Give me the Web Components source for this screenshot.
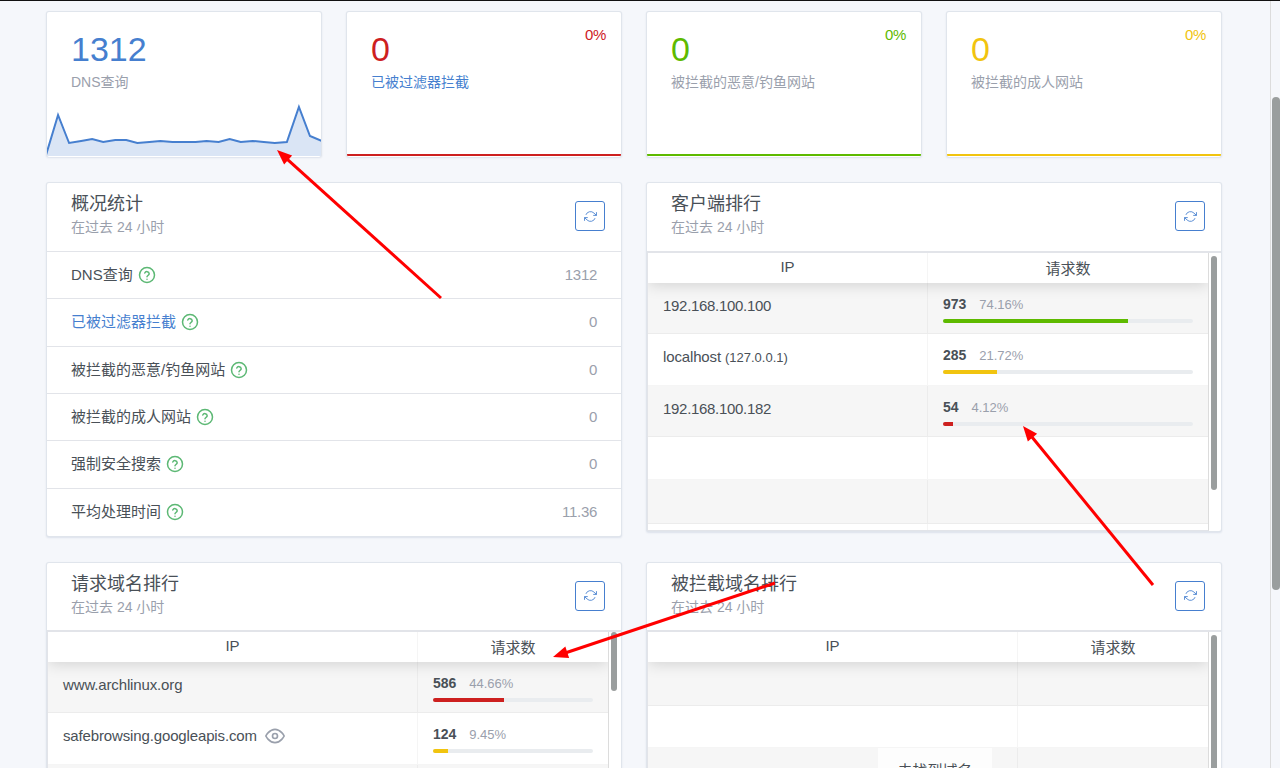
<!DOCTYPE html>
<html lang="zh">
<head>
<meta charset="utf-8">
<title>AdGuard Home</title>
<style>
    html, body {
        margin: 0;
        height: 768px;
        overflow: hidden;
        background: #f5f7fb;
    }
    body {
        font-family: "Liberation Sans", "Noto Sans CJK SC", sans-serif;
        font-size: 14px;
        color: #495057;
    }
</style>
</head>
<body>
<dash-app>
    <stat-card value="1312" label="DNS查询" chart></stat-card>
    <stat-card value="0" label="已被过滤器拦截" pct="0%" color="#cd201f" label-color="#467fcf"></stat-card>
    <stat-card value="0" label="被拦截的恶意/钓鱼网站" pct="0%" color="#5eba00"></stat-card>
    <stat-card value="0" label="被拦截的成人网站" pct="0%" color="#f1c40f"></stat-card>

    <dash-panel heading="概况统计">
        <stat-row label="DNS查询" value="1312"></stat-row>
        <stat-row label="已被过滤器拦截" value="0" label-color="#467fcf"></stat-row>
        <stat-row label="被拦截的恶意/钓鱼网站" value="0"></stat-row>
        <stat-row label="被拦截的成人网站" value="0"></stat-row>
        <stat-row label="强制安全搜索" value="0"></stat-row>
        <stat-row label="平均处理时间" value="11.36" last></stat-row>
    </dash-panel>

    <dash-panel heading="客户端排行">
        <rank-table col="280" thumb-top="3" thumb-height="234" height="279">
            <rank-row h="51" shade name="192.168.100.100" count="973" pct="74.16" color="#5eba00"></rank-row>
            <rank-row h="52" name="localhost" extra="(127.0.0.1)" count="285" pct="21.72" color="#f1c40f"></rank-row>
            <rank-row h="51" shade name="192.168.100.182" count="54" pct="4.12" color="#cd201f"></rank-row>
            <rank-row h="43"></rank-row>
            <rank-row h="44" shade></rank-row>
            <rank-row h="8"></rank-row>
        </rank-table>
    </dash-panel>

    <dash-panel heading="请求域名排行" short>
        <rank-table col="370" thumb-top="0" thumb-height="59" height="300">
            <rank-row h="51" shade name="www.archlinux.org" count="586" pct="44.66" color="#cd201f"></rank-row>
            <rank-row h="52" name="safebrowsing.googleapis.com" eye count="124" pct="9.45" color="#f1c40f"></rank-row>
            <rank-row h="51" shade></rank-row>
        </rank-table>
    </dash-panel>

    <dash-panel heading="被拦截域名排行" short>
        <rank-table col="370" thumb-top="3" thumb-height="300" height="300" empty="未找到域名">
            <rank-row h="44" shade></rank-row>
            <rank-row h="42"></rank-row>
            <rank-row h="44" shade></rank-row>
        </rank-table>
    </dash-panel>
</dash-app>

<script>
const ARROWS = [
    [441, 298, 277, 150],
    [1153, 585, 1023, 426],
    [775, 583, 553, 657]
];

class DashApp extends HTMLElement {
    constructor() {
        super();
        this.shadowDOM = this.attachShadow({ mode: 'open' });
    }

    connectedCallback() {
        const arrows = ARROWS.map(([x1, y1, x2, y2]) => {
            const a = Math.atan2(y2 - y1, x2 - x1);
            const p = (d, s) => `${x2 - Math.cos(a) * d - Math.sin(a) * s},${y2 - Math.sin(a) * d + Math.cos(a) * s}`;
            return `<line x1="${x1}" y1="${y1}" x2="${x2 - Math.cos(a) * 8}" y2="${y2 - Math.sin(a) * 8}" />
                <polygon points="${x2},${y2} ${p(15, 6)} ${p(15, -6)}" />`;
        }).join('');

        this.shadowDOM.innerHTML = `
            <style>
                :host {
                    display: flex;
                    position: relative;
                    height: 767px;
                    border-top: 1px solid #111;
                    overflow: hidden;
                }
                main {
                    flex: 1;
                    padding: 10px 0 0 46px;
                    display: grid;
                    grid-template-columns: repeat(4, 276px);
                    grid-auto-rows: min-content;
                    column-gap: 24px;
                    row-gap: 25px;
                    align-items: start;
                }
                ::slotted(dash-panel) {
                    grid-column: span 2;
                }
                .scroll {
                    width: 10px;
                    box-sizing: border-box;
                    border-left: 1px solid #dcdcdc;
                    background: #f5f7fb;
                    padding: 96px 0 0 1px;
                }
                .thumb {
                    width: 8px;
                    height: 493px;
                    border-radius: 4px;
                    background: #9a9e9e;
                }
                svg {
                    position: absolute;
                    left: 0;
                    top: -1px;
                    width: 1280px;
                    height: 768px;
                    z-index: 10;
                    pointer-events: none;
                }
                line {
                    stroke: #f00;
                    stroke-width: 3;
                }
                polygon {
                    fill: #f00;
                }
            </style>
            <main><slot></slot></main>
            <div class="scroll"><div class="thumb"></div></div>
            <svg viewBox="0 0 1280 768">${arrows}</svg>
        `;
    }
}

class StatCard extends HTMLElement {
    constructor() {
        super();
        this.shadowDOM = this.attachShadow({ mode: 'open' });
    }

    connectedCallback() {
        const color = this.getAttribute('color') || '#467fcf';
        const labelColor = this.getAttribute('label-color') || '#9aa0ac';
        const pct = this.getAttribute('pct');
        const pts = [[0, 54], [12, 14], [23, 42], [35, 40], [46, 38], [57, 41], [69, 39], [80, 39], [91, 42], [103, 41], [114, 40], [126, 41], [137, 41], [149, 41], [160, 40], [172, 41], [183, 38], [194, 41], [206, 40], [217, 41], [228, 42], [240, 41], [252, 6], [263, 35], [275, 40]];
        const line = pts.map(p => p.join(',')).join(' ');
        const chart = this.hasAttribute('chart')
            ? `<svg viewBox="0 -1 275 56" preserveAspectRatio="none">
                    <polygon points="0,56 ${line} 275,56" fill="#467fcf" fill-opacity="0.2" />
                    <polyline points="${line}" fill="none" stroke="#467fcf" stroke-width="2" />
               </svg>`
            : `<div class="bar"></div>`;

        this.shadowDOM.innerHTML = `
            <style>
                :host {
                    display: flex;
                    flex-direction: column;
                    height: 146px;
                    box-sizing: border-box;
                    background: #fff;
                    border: 1px solid rgba(0, 40, 100, 0.12);
                    border-bottom: none;
                    border-radius: 3px;
                    box-shadow: 0 1px 2px rgba(0, 40, 100, 0.1);
                    overflow: hidden;
                    position: relative;
                }
                .body {
                    flex: 1;
                    padding: 17px 24px 0;
                }
                .value {
                    font-size: 34px;
                    line-height: 40px;
                    color: ${color};
                }
                .label {
                    margin-top: 2px;
                    line-height: 22px;
                    color: ${labelColor};
                }
                .pct {
                    position: absolute;
                    right: 15px;
                    top: 14px;
                    font-size: 15px;
                    letter-spacing: -0.3px;
                    line-height: 17px;
                    color: ${color};
                }
                svg {
                    display: block;
                    width: 276px;
                    height: 56px;
                    margin: 0 0 1px -1px;
                }
                .bar {
                    height: 2px;
                    margin: 0 0 1px -1px;
                    width: 276px;
                    background: ${color};
                }
            </style>
            <div class="body">
                <div class="value">${this.getAttribute('value')}</div>
                <div class="label">${this.getAttribute('label')}</div>
            </div>
            ${pct ? `<div class="pct">${pct}</div>` : ''}
            ${chart}
        `;
    }
}

class DashPanel extends HTMLElement {
    constructor() {
        super();
        this.shadowDOM = this.attachShadow({ mode: 'open' });
    }

    connectedCallback() {
        const short = this.hasAttribute('short');
        this.shadowDOM.innerHTML = `
            <style>
                :host {
                    display: block;
                    box-sizing: border-box;
                    background: #fff;
                    border: 1px solid rgba(0, 40, 100, 0.12);
                    border-radius: 3px;
                    box-shadow: 0 1px 2px rgba(0, 40, 100, 0.1);
                }
                header {
                    height: ${short ? 68 : 69}px;
                    box-sizing: border-box;
                    display: flex;
                    align-items: center;
                    justify-content: space-between;
                    padding: 0 16px 0 24px;
                    border-bottom: 1px solid #e2e4e9;
                }
                .titles {
                    margin-bottom: ${short ? 4 : 6}px;
                }
                h3 {
                    margin: 0;
                    font-size: 18px;
                    font-weight: 400;
                    line-height: 24px;
                }
                p {
                    margin: 1px 0 0;
                    line-height: 20px;
                    color: #9aa0ac;
                }
                button {
                    width: 30px;
                    height: 30px;
                    margin-bottom: ${short ? 1 : 2}px;
                    padding: 0;
                    display: flex;
                    align-items: center;
                    justify-content: center;
                    background: #fff;
                    border: 1px solid #467fcf;
                    border-radius: 3px;
                }
                svg {
                    width: 13px;
                    height: 13px;
                    fill: none;
                    stroke: #467fcf;
                    stroke-width: 1.6;
                }
            </style>
            <header>
                <div class="titles">
                    <h3>${this.getAttribute('heading')}</h3>
                    <p>在过去 24 小时</p>
                </div>
                <button>
                    <svg viewBox="0 0 24 24">
                        <polyline points="23 4 23 10 17 10"></polyline>
                        <polyline points="1 20 1 14 7 14"></polyline>
                        <path d="M3.51 9a9 9 0 0 1 14.85-3.36L23 10M1 14l4.64 4.36A9 9 0 0 0 20.49 15"></path>
                    </svg>
                </button>
            </header>
            <slot></slot>
        `;
    }
}

class StatRow extends HTMLElement {
    constructor() {
        super();
        this.shadowDOM = this.attachShadow({ mode: 'open' });
    }

    connectedCallback() {
        const last = this.hasAttribute('last');
        this.shadowDOM.innerHTML = `
            <style>
                :host {
                    display: flex;
                    align-items: center;
                    height: 47.33px;
                    box-sizing: border-box;
                    padding: 0 24px;
                    font-size: 15px;
                    ${last ? '' : 'border-bottom: 1px solid #e2e4e9;'}
                }
                .label {
                    margin-bottom: 3px;
                    color: ${this.getAttribute('label-color') || '#495057'};
                }
                svg {
                    width: 18px;
                    height: 18px;
                    margin-left: 5px;
                    fill: none;
                    stroke: #5cb874;
                    stroke-width: 1.5;
                    stroke-linecap: round;
                }
                .value {
                    margin-left: auto;
                    margin-bottom: 1px;
                    letter-spacing: -0.3px;
                    color: #9aa0ac;
                }
            </style>
            <span class="label">${this.getAttribute('label')}</span>
            <svg viewBox="0 0 18 18">
                <circle cx="9" cy="9" r="7.5"></circle>
                <path d="M6.8 7a2.3 2.3 0 0 1 4.4.7c0 1.5-2.2 2-2.2 3"></path>
                <path d="M9 13.2h.01"></path>
            </svg>
            <span class="value">${this.getAttribute('value')}</span>
        `;
    }
}

class RankTable extends HTMLElement {
    constructor() {
        super();
        this.shadowDOM = this.attachShadow({ mode: 'open' });
    }

    connectedCallback() {
        const col = this.getAttribute('col');
        const empty = this.getAttribute('empty');
        this.style.setProperty('--col', col + 'px');
        this.shadowDOM.innerHTML = `
            <style>
                :host {
                    display: flex;
                    height: ${this.getAttribute('height')}px;
                    box-sizing: border-box;
                    border-top: 1px solid #e2e4e9;
                    overflow: hidden;
                }
                .table {
                    width: 562px;
                    box-sizing: border-box;
                    border-left: 1px solid #e2e4e9;
                    border-right: 1px solid #dcdcdc;
                    border-bottom: 1px solid #e2e4e9;
                    position: relative;
                    overflow: hidden;
                }
                .head {
                    display: flex;
                    height: 30px;
                    position: relative;
                    z-index: 1;
                    background: #fff;
                    box-shadow: 0 2px 15px rgba(0, 0, 0, 0.15);
                    font-size: 15px;
                    line-height: 29px;
                    text-align: center;
                }
                .head div:first-child {
                    width: var(--col);
                    box-sizing: border-box;
                    border-right: 1px solid rgba(0, 0, 0, 0.04);
                    line-height: 27px;
                }
                .head div:last-child {
                    flex: 1;
                    padding-top: 1px;
                }
                .track {
                    width: 12px;
                    box-sizing: border-box;
                    padding: ${this.getAttribute('thumb-top')}px 0 0 2px;
                }
                .thumb {
                    width: 6px;
                    height: ${this.getAttribute('thumb-height')}px;
                    border-radius: 3px;
                    background: #9a9e9e;
                }
                .empty {
                    position: absolute;
                    left: 230px;
                    top: 116px;
                    width: 114px;
                    height: 60px;
                    padding-top: 14px;
                    box-sizing: border-box;
                    font-size: 15px;
                    line-height: 17px;
                    text-align: center;
                    background: rgba(255, 255, 255, 0.8);
                    z-index: 2;
                }
            </style>
            <div class="table">
                <div class="head"><div>IP</div><div>请求数</div></div>
                <slot></slot>
                ${empty ? `<div class="empty">${empty}</div>` : ''}
            </div>
            <div class="track"><div class="thumb"></div></div>
        `;
    }
}

class RankRow extends HTMLElement {
    constructor() {
        super();
        this.shadowDOM = this.attachShadow({ mode: 'open' });
    }

    connectedCallback() {
        const name = this.getAttribute('name');
        const extra = this.getAttribute('extra');
        const count = this.getAttribute('count');
        const pct = this.getAttribute('pct');
        const tight = /^[\d.]+$/.test(name || '');
        const eye = this.hasAttribute('eye')
            ? `<svg viewBox="0 0 24 24">
                    <path d="M1 12s4-8 11-8 11 8 11 8-4 8-11 8-11-8-11-8z"></path>
                    <circle cx="12" cy="12" r="3"></circle>
               </svg>`
            : '';

        this.shadowDOM.innerHTML = `
            <style>
                :host {
                    display: flex;
                    height: ${this.getAttribute('h')}px;
                    box-sizing: border-box;
                    border-bottom: 1px solid rgba(0, 0, 0, 0.04);
                    background: ${this.hasAttribute('shade') ? '#f6f6f6' : '#fff'};
                }
                .name {
                    width: var(--col);
                    box-sizing: border-box;
                    border-right: 1px solid rgba(0, 0, 0, 0.04);
                    padding: 14px 15px 0;
                    font-size: 15px;
                    letter-spacing: ${tight ? '-0.3px' : '-0.14px'};
                    line-height: 17px;
                    display: flex;
                    align-items: flex-start;
                    white-space: pre;
                }
                small {
                    font-size: 13px;
                    letter-spacing: 0;
                    margin-left: 4px;
                    line-height: 20px;
                }
                svg {
                    width: 20px;
                    height: 20px;
                    margin: -1px 0 0 8px;
                    fill: none;
                    stroke: #9aa0ac;
                    stroke-width: 2;
                }
                .count {
                    flex: 1;
                    padding: 13px 15px 0;
                    min-width: 0;
                }
                b {
                    line-height: 17px;
                    margin-right: 9px;
                }
                span {
                    font-size: 13px;
                    color: #9aa0ac;
                }
                .bar {
                    height: 4px;
                    margin-top: 6px;
                    border-radius: 2px;
                    background: #e9ecef;
                    overflow: hidden;
                }
                .fill {
                    height: 100%;
                    width: ${pct}%;
                    background: ${this.getAttribute('color')};
                }
            </style>
            <div class="name">${name ? name : ''}${extra ? `<small>${extra}</small>` : ''}${eye}</div>
            <div class="count">
                ${count ? `<b>${count}</b> <span>${pct}%</span>
                <div class="bar"><div class="fill"></div></div>` : ''}
            </div>
        `;
    }
}

customElements.define('stat-card', StatCard);
customElements.define('dash-panel', DashPanel);
customElements.define('stat-row', StatRow);
customElements.define('rank-table', RankTable);
customElements.define('rank-row', RankRow);
customElements.define('dash-app', DashApp);
</script>
</body>
</html>
